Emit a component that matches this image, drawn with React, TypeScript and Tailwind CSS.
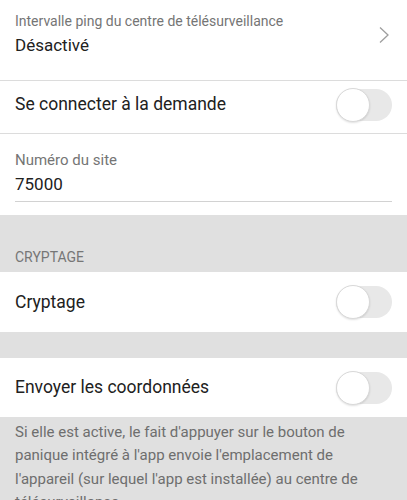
import React from 'react';

function Toggle() {
  return (
    <div className="relative h-[32px] w-[56px] shrink-0 rounded-full bg-[#e8e8e8]">
      <div className="absolute left-0 top-[-1px] h-[34px] w-[34px] rounded-full border border-[#d9d9d9] bg-white shadow-[0_1px_2px_rgba(0,0,0,0.12)]" />
    </div>
  );
}

function SwitchRow({ label, h }: { label: string; h: string }) {
  return (
    <div className={`flex items-center justify-between bg-white pl-[15px] pr-[15px] ${h}`}>
      <span className="text-[17.5px] text-[#212121]">{label}</span>
      <Toggle />
    </div>
  );
}

export default function App() {
  return (
    <div className="h-[500px] w-[407px] overflow-hidden bg-[#e0e0e0]" style={{ fontFamily: 'Roboto, "Noto Sans", sans-serif' }}>
      {/* ping interval */}
      <div className="flex h-[81px] justify-between border-b border-[#dcdcdc] bg-white pl-[15px] pr-[17px] pt-[11px]">
        <div className="flex flex-col">
          <span className="text-[14px] leading-[20px] text-[#757575]">Intervalle ping du centre de télésurveillance</span>
          <span className="mt-[2px] text-[17px] leading-[24px] text-[#212121]">Désactivé</span>
        </div>
        <svg width="12" height="18" viewBox="0 0 12 18" className="mt-[15px]">
          <path d="M2 1.5 L10 9 L2 16.5" fill="none" stroke="#9e9e9e" strokeWidth="1.3" />
        </svg>
      </div>

      <div className="flex h-[53px] items-center justify-between border-b border-[#dcdcdc] bg-white px-[15px] pb-[5px]">
        <span className="text-[17.5px] text-[#212121]">Se connecter à la demande</span>
        <Toggle />
      </div>

      {/* site number */}
      <div className="h-[81px] bg-white px-[15px] pt-[16px]">
        <div className="text-[15px] leading-[20px] text-[#757575]">Numéro du site</div>
        <div className="mt-[2px] border-b-[1.5px] border-[#d2d2d2] pb-[5px] text-[17px] leading-[24px] text-[#212121]">75000</div>
      </div>

      {/* section header */}
      <div className="flex h-[57px] items-end bg-[#e0e0e0] px-[15px] pb-[6px]">
        <span className="text-[14px] leading-[18px] text-[#767676]">CRYPTAGE</span>
      </div>

      <SwitchRow label="Cryptage" h="h-[60px]" />

      <div className="h-[26px] bg-[#e0e0e0]" />

      <SwitchRow label="Envoyer les coordonnées" h="h-[59px]" />

      <div className="bg-[#e0e0e0] px-[15px] pt-[4px]">
        <p className="text-[15px] leading-[23.3px] text-[#6e6e6e]">
          Si elle est active, le fait d'appuyer sur le bouton de panique intégré à l'app envoie l'emplacement de l'appareil (sur lequel l'app est installée) au centre de télésurveillance.
        </p>
      </div>
    </div>
  );
}
